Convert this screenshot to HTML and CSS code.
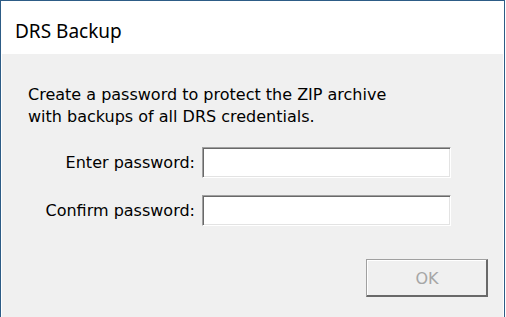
FILE: index.html
```html
<!DOCTYPE html>
<html>
<head>
    <title>DRS Backup</title>
    <link rel="stylesheet" href="styles.css">
</head>
<body>
    <div class="window">
        <div class="title-bar">DRS Backup</div>
        <div class="client">
            <p class="intro">Create a password to protect the ZIP archive<br>with backups of all DRS credentials.</p>
            <form id="backupForm">
                <div class="form-row">
                    <label for="password">Enter password:</label>
                    <input type="password" id="password">
                </div>
                <div class="form-row">
                    <label for="confirm">Confirm password:</label>
                    <input type="password" id="confirm">
                </div>
                <div class="actions">
                    <button type="submit" class="ok-btn" disabled>OK</button>
                </div>
            </form>
        </div>
    </div>
</body>
</html>
```

FILE: styles.css
```css
html, body {
    margin: 0;
    height: 100%;
    background: white;
    overflow: hidden;
}
.window {
    box-sizing: border-box;
    display: flex;
    flex-direction: column;
    width: 505px;
    height: 100%;
    border: 1px solid #2d5c86;
    border-bottom: none;
    padding: 0 1px;
    background: white;
    font-family: "DejaVu Sans", Tahoma, sans-serif;
    color: #000;
}
.title-bar {
    flex: none;
    height: 53px;
    padding-left: 13px;
    font-family: "Noto Sans", "Open Sans", sans-serif;
    font-size: 19px;
    line-height: 60px;
    box-sizing: border-box;
}
.client {
    flex: 1;
    background: #f0f0f0;
    padding: 30px 15px 0 26px;
}
.intro {
    margin: 0 0 19px;
    font-size: 16px;
    line-height: 22px;
}
.form-row {
    display: flex;
    align-items: center;
    gap: 7px;
    margin-bottom: 17px;
}
.form-row label {
    width: 167px;
    text-align: right;
    font-size: 16px;
}
.form-row input {
    box-sizing: border-box;
    width: 249px;
    height: 31px;
    margin: 0;
    padding: 0 4px;
    background: white;
    border: 1px solid;
    border-color: #a0a0a0 #ffffff #ffffff #a0a0a0;
    box-shadow: inset 1px 1px 0 #696969, inset -1px -1px 0 #e3e3e3;
    outline: none;
}
.actions {
    display: flex;
    justify-content: flex-end;
    padding-top: 16px;
}
.ok-btn {
    box-sizing: border-box;
    width: 122px;
    height: 38px;
    background: #f0f0f0;
    color: #a6a6a6;
    font-family: "DejaVu Sans", Tahoma, sans-serif;
    font-size: 16px;
    border: 1px solid;
    border-color: #a0a0a0 #696969 #696969 #a0a0a0;
    box-shadow: inset -1px -1px 0 #696969, inset 1px 1px 0 #fff;
}
```
